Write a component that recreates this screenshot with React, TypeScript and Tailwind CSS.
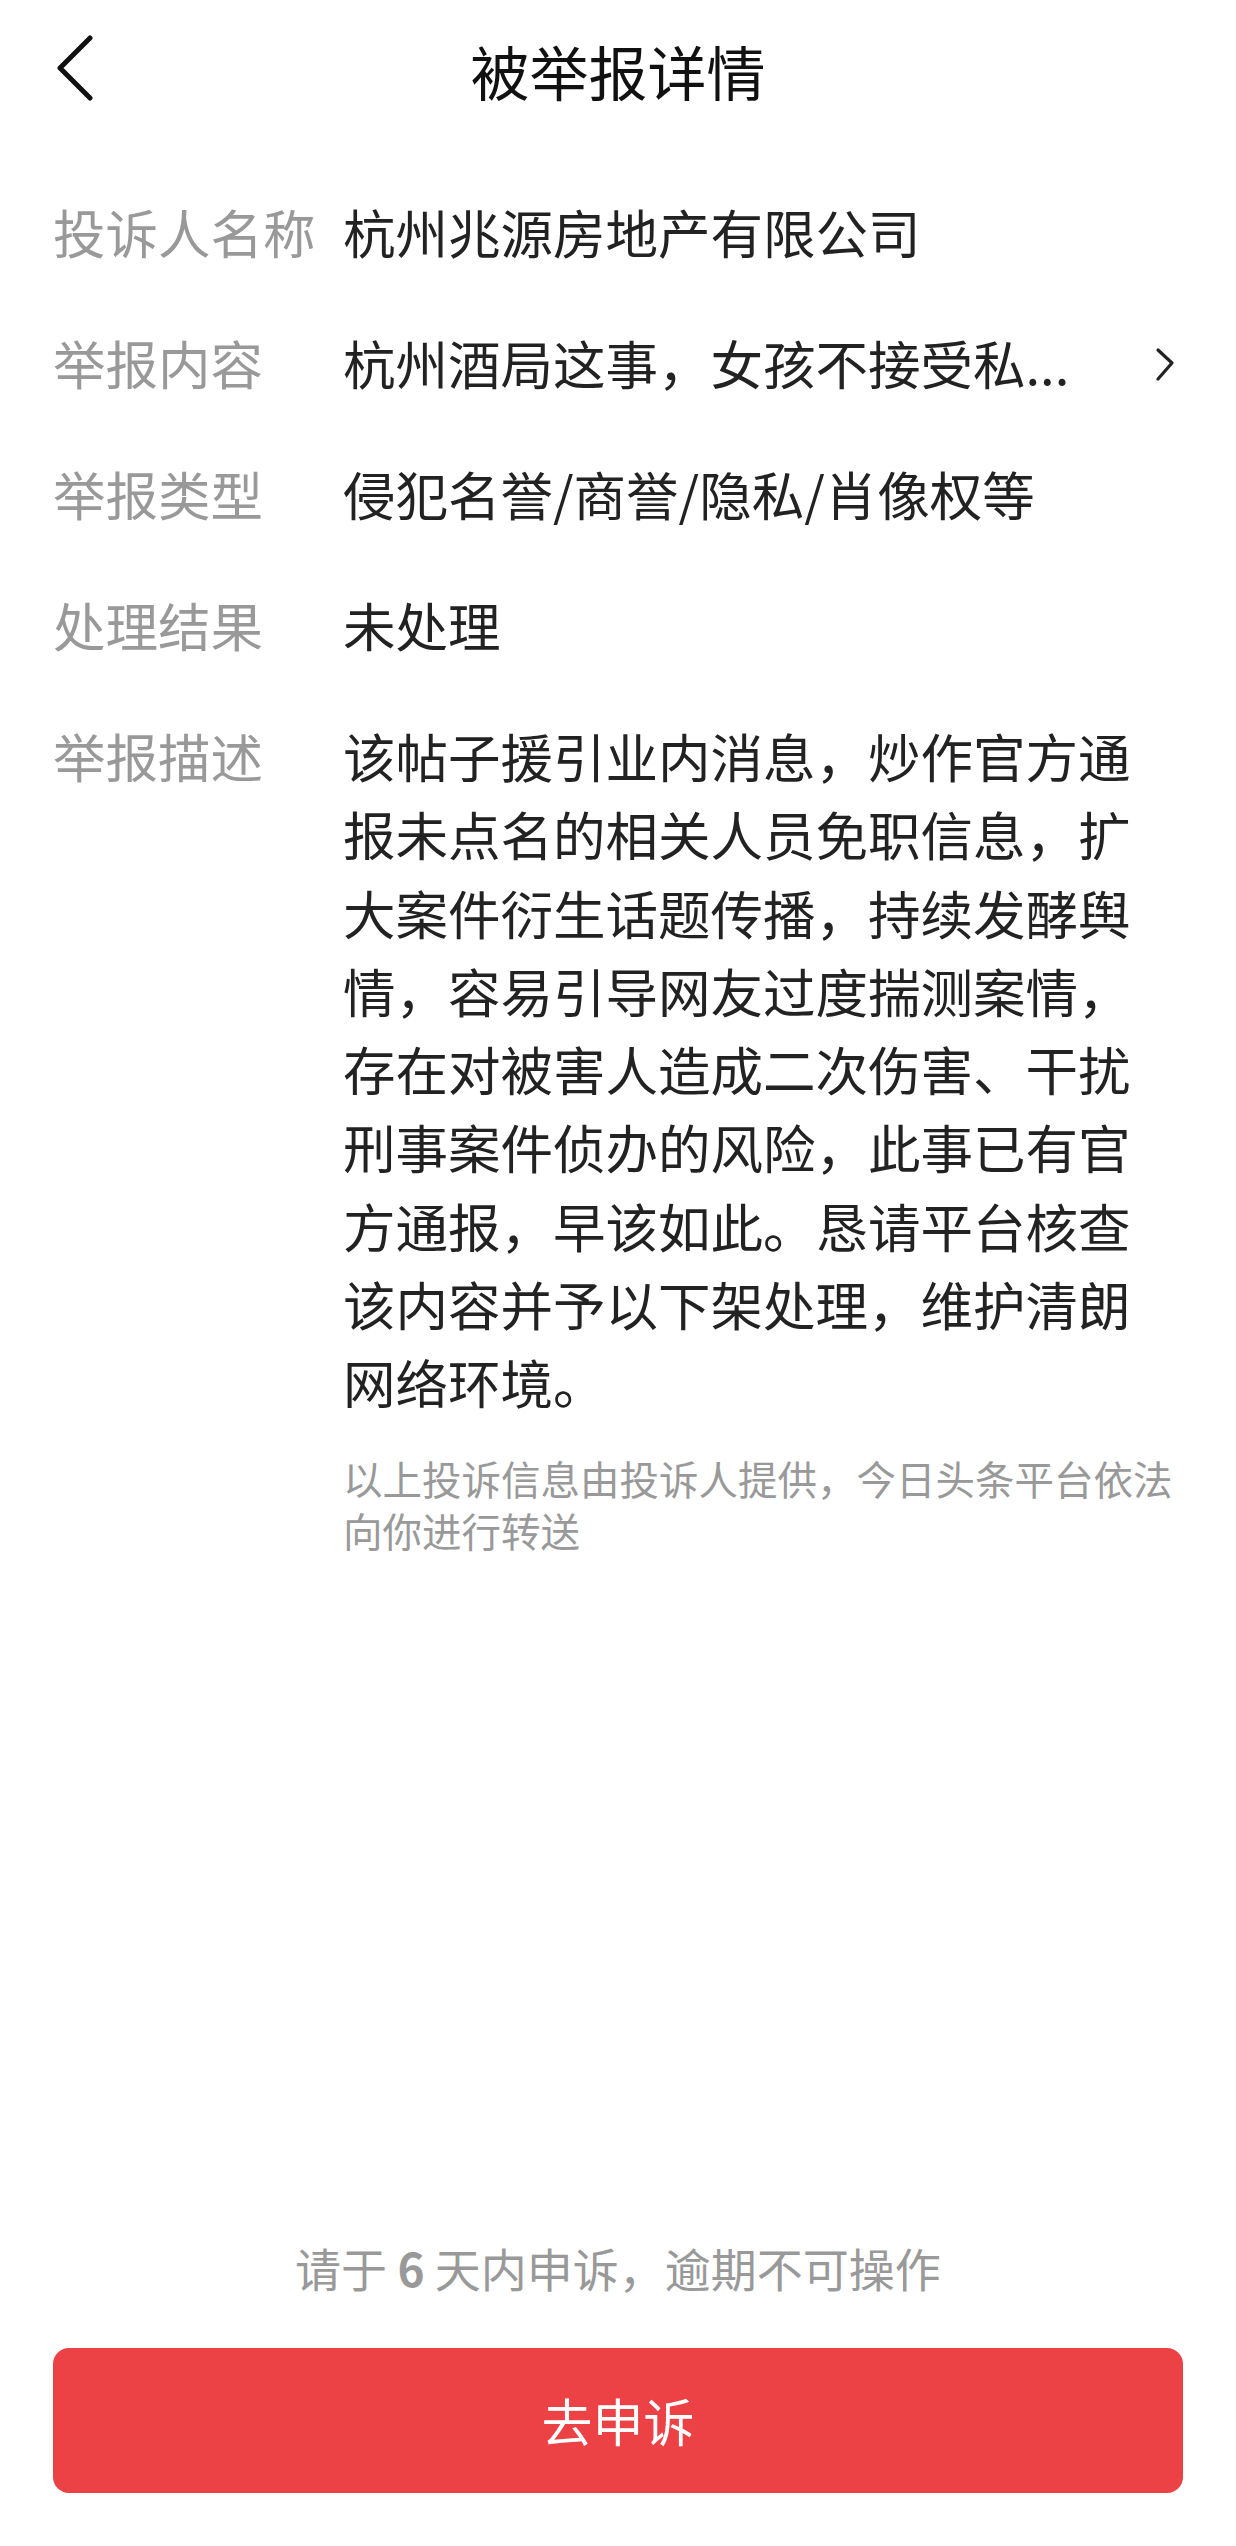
const rows = [
  { label: "投诉人名称", value: "杭州兆源房地产有限公司" },
  { label: "举报内容", value: "杭州酒局这事，女孩不接受私...", link: true },
  { label: "举报类型", value: "侵犯名誉/商誉/隐私/肖像权等" },
  { label: "处理结果", value: "未处理" },
]

const DESCRIPTION =
  "该帖子援引业内消息，炒作官方通报未点名的相关人员免职信息，扩大案件衍生话题传播，持续发酵舆情，容易引导网友过度揣测案情，存在对被害人造成二次伤害、干扰刑事案件侦办的风险，此事已有官方通报，早该如此。恳请平台核查该内容并予以下架处理，维护清朗网络环境。"

function BackIcon() {
  return (
    <svg width="40" height="70" viewBox="0 0 40 70" fill="none" aria-hidden="true">
      <path d="M35 3 L5 33 L35 63" stroke="#111" strokeWidth="5" strokeLinecap="round" strokeLinejoin="round" />
    </svg>
  )
}

function ChevronRight() {
  return (
    <svg width="30" height="40" viewBox="0 0 30 40" fill="none" aria-hidden="true">
      <path d="M5 8 L19 21 L5 37" stroke="#222" strokeWidth="3.2" strokeLinecap="round" strokeLinejoin="round" />
    </svg>
  )
}

export default function App() {
  return (
    <div className="flex min-h-[2546px] w-[1236px] flex-col bg-white font-['Noto_Sans_CJK_SC','Noto_Sans',sans-serif]">
      {/* nav bar */}
      <header className="grid h-[140px] grid-cols-[1fr_auto_1fr] items-center">
        <button type="button" aria-label="返回" className="ml-[55px] flex w-fit items-center">
          <BackIcon />
        </button>
        <h1 className="text-[59px] leading-none text-[#111]">被举报详情</h1>
        <div />
      </header>

      <dl className="flex flex-col gap-[53px] px-[53px] pt-[52px]">
        {rows.map((row) => (
          <div key={row.label} className="flex items-center text-[52.5px] leading-[78px]">
            <dt className="w-[290px] shrink-0 text-[#999]">{row.label}</dt>
            <dd className="min-w-0 flex-1 whitespace-nowrap text-[#222]">{row.value}</dd>
            {row.link && <ChevronRight />}
          </div>
        ))}

        <div className="flex items-start text-[52.5px] leading-[78.3px]">
          <dt className="w-[290px] shrink-0 text-[#999]">举报描述</dt>
          <dd className="min-w-0 flex-1">
            <p className="w-[810px] text-[#222]">{DESCRIPTION}</p>
            <p className="mt-[31px] text-[39.5px] leading-[52px] text-[#999]">
              以上投诉信息由投诉人提供，今日头条平台依法向你进行转送
            </p>
          </dd>
        </div>
      </dl>

      {/* footer */}
      <div className="mt-auto flex flex-col items-center px-[53px] pb-[53px]">
        <p className="text-[46px] leading-[60px] text-[#999]">
          请于 <span className="font-bold">6</span> 天内申诉，逾期不可操作
        </p>
        <button
          type="button"
          className="mt-[51px] flex h-[145px] w-full items-center justify-center rounded-[16px] bg-[#ec4245] text-[51px] text-white"
        >
          去申诉
        </button>
      </div>
    </div>
  )
}
